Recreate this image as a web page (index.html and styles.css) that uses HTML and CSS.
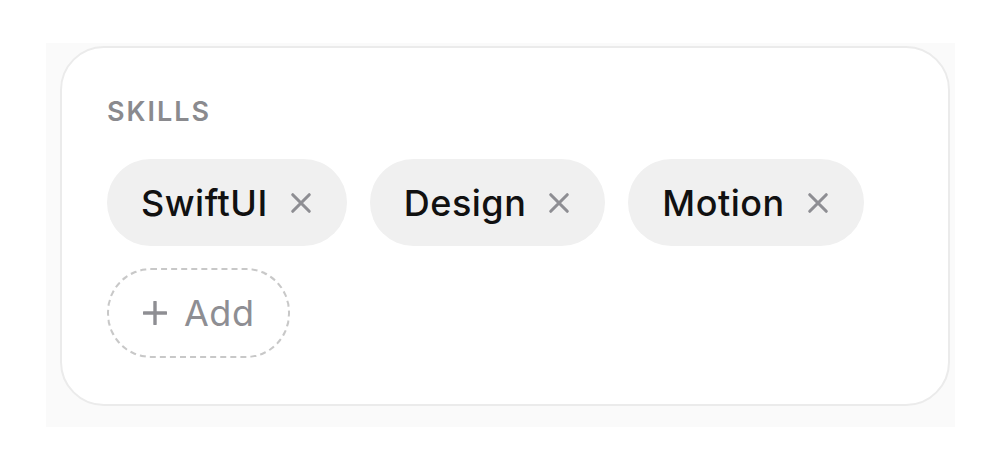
FILE: index.html
```html
<!DOCTYPE html>
<html lang="en">
<head>
  <meta charset="UTF-8" />
  <title>Skills</title>
  <link rel="stylesheet" href="styles.css">
</head>
<body>
  <div class="backdrop">
    <div class="card">
      <div class="label">SKILLS</div>
      <div class="chips">
        <div class="chip">
          <span>SwiftUI</span>
          <svg class="x" viewBox="0 0 24 24"><path d="M3 3L21 21M21 3L3 21"/></svg>
        </div>
        <div class="chip">
          <span>Design</span>
          <svg class="x" viewBox="0 0 24 24"><path d="M3 3L21 21M21 3L3 21"/></svg>
        </div>
        <div class="chip">
          <span>Motion</span>
          <svg class="x" viewBox="0 0 24 24"><path d="M3 3L21 21M21 3L3 21"/></svg>
        </div>
        <div class="chip add">
          <svg class="plus" viewBox="0 0 24 24"><path d="M12 1V23M1 12H23"/></svg>
          <span>Add</span>
        </div>
      </div>
    </div>
  </div>
</body>
</html>
```

FILE: styles.css
```css
* {
  margin: 0;
  padding: 0;
  box-sizing: border-box;
}
body {
  font-family: Inter, "Noto Sans", sans-serif;
  background: #fff;
  color: #111;
}
/* faint shadow plate behind the card */
.backdrop {
  margin: 43px 45px 0 46px;
  padding: 3px 5px 21px 14px;
  background: #fafafa;
}
.card {
  background: #fff;
  border: 2px solid #ebebeb;
  border-radius: 44px;
  padding: 48px 45px 46px;
}
.label {
  font-size: 27px;
  font-weight: 600;
  letter-spacing: 2px;
  color: #8a8a8e;
  line-height: 32px;
}
.chips {
  display: flex;
  flex-wrap: wrap;
  gap: 22px 23px;
  margin-top: 31px;
  max-width: 800px;
}
.chip {
  display: flex;
  align-items: center;
  gap: 22px;
  height: 87px;
  padding: 0 35px 0 34px;
  background: #f0f0f0;
  border-radius: 44px;
  font-size: 36px;
  font-weight: 500;
  letter-spacing: 0.5px;
}
.x {
  width: 22px;
  height: 22px;
  fill: none;
  stroke: #8e8e93;
  stroke-width: 3.4;
  stroke-linecap: round;
}
.add {
  background: #fff;
  border: 2px dashed #c8c8c8;
  height: 90px;
  padding: 0 34px;
  gap: 17px;
  color: #8e8e93;
  font-weight: 400;
}
.plus {
  width: 24px;
  height: 24px;
  fill: none;
  stroke: #8e8e93;
  stroke-width: 3.4;
  stroke-linecap: round;
}
```
